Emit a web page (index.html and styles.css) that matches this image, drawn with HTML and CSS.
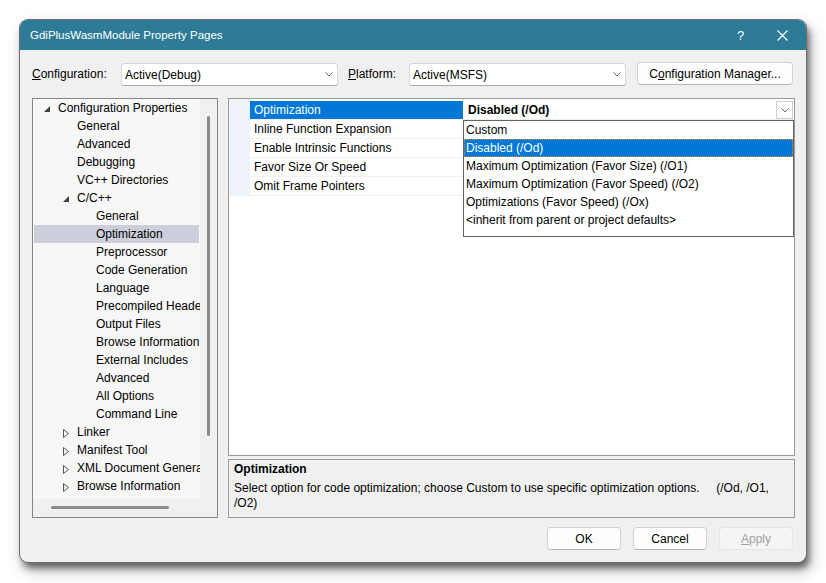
FILE: index.html
```html
<!DOCTYPE html>
<html>
<head>
<meta charset="utf-8">
<link rel="stylesheet" href="styles.css">
</head>
<body>
<div class="window">
  <div class="titlebar">
    <span class="title">GdiPlusWasmModule Property Pages</span>
    <span class="help">?</span>
    <svg class="close" width="11" height="11" viewBox="0 0 11 11"><path d="M0.5 0.5L10.5 10.5M10.5 0.5L0.5 10.5" stroke="#fff" stroke-width="1.1" fill="none"/></svg>
  </div>
  <div class="body">
    <div class="config-row">
      <span class="lbl lbl-config"><u>C</u>onfiguration:</span>
      <div class="combo"><span class="combo-text">Active(Debug)</span><svg class="chev" width="8" height="5" viewBox="0 0 8 5"><path d="M0.5 0.5L4 4L7.5 0.5" stroke="#666" fill="none"/></svg></div>
      <span class="lbl lbl-platform"><u>P</u>latform:</span>
      <div class="combo"><span class="combo-text">Active(MSFS)</span><svg class="chev" width="8" height="5" viewBox="0 0 8 5"><path d="M0.5 0.5L4 4L7.5 0.5" stroke="#666" fill="none"/></svg></div>
      <button class="btn btn-cfg">C<u>o</u>nfiguration Manager...</button>
    </div>
    <div class="main">
      <div class="tree">
        <div class="tree-area">
          <div class="tree-list">
            <div class="node l0t"><svg class="tw-exp" width="6" height="6" viewBox="0 0 6 6"><polygon points="6,0 6,6 0,6" fill="#404040"/></svg><span>Configuration Properties</span></div>
            <div class="node l1">General</div>
            <div class="node l1">Advanced</div>
            <div class="node l1">Debugging</div>
            <div class="node l1">VC++ Directories</div>
            <div class="node l1t"><svg class="tw-exp" width="6" height="6" viewBox="0 0 6 6"><polygon points="6,0 6,6 0,6" fill="#404040"/></svg><span>C/C++</span></div>
            <div class="node l2">General</div>
            <div class="node l2 selected">Optimization</div>
            <div class="node l2">Preprocessor</div>
            <div class="node l2">Code Generation</div>
            <div class="node l2">Language</div>
            <div class="node l2">Precompiled Headers</div>
            <div class="node l2">Output Files</div>
            <div class="node l2">Browse Information</div>
            <div class="node l2">External Includes</div>
            <div class="node l2">Advanced</div>
            <div class="node l2">All Options</div>
            <div class="node l2">Command Line</div>
            <div class="node l1t"><svg class="tw-col" width="6" height="9" viewBox="0 0 6 9"><polygon points="0.5,0.5 5.5,4.5 0.5,8.5" stroke="#555" fill="none"/></svg><span>Linker</span></div>
            <div class="node l1t"><svg class="tw-col" width="6" height="9" viewBox="0 0 6 9"><polygon points="0.5,0.5 5.5,4.5 0.5,8.5" stroke="#555" fill="none"/></svg><span>Manifest Tool</span></div>
            <div class="node l1t"><svg class="tw-col" width="6" height="9" viewBox="0 0 6 9"><polygon points="0.5,0.5 5.5,4.5 0.5,8.5" stroke="#555" fill="none"/></svg><span>XML Document Generator</span></div>
            <div class="node l1t"><svg class="tw-col" width="6" height="9" viewBox="0 0 6 9"><polygon points="0.5,0.5 5.5,4.5 0.5,8.5" stroke="#555" fill="none"/></svg><span>Browse Information</span></div>
          </div>
          <div class="vscroll"><div class="vthumb"></div></div>
        </div>
        <div class="hscroll"><div class="hthumb"></div></div>
      </div>
      <div class="right">
        <div class="grid">
          <div class="grid-rows">
            <div class="row"><div class="gut"></div><div class="name sel">Optimization</div><div class="val"><b>Disabled (/Od)</b><span class="ddbtn"><svg width="8" height="5" viewBox="0 0 8 5"><path d="M0.5 0.5L4 4L7.5 0.5" stroke="#666" fill="none"/></svg></span></div></div>
            <div class="row"><div class="gut"></div><div class="name">Inline Function Expansion</div><div class="val"></div></div>
            <div class="row"><div class="gut"></div><div class="name">Enable Intrinsic Functions</div><div class="val"></div></div>
            <div class="row"><div class="gut"></div><div class="name">Favor Size Or Speed</div><div class="val"></div></div>
            <div class="row"><div class="gut"></div><div class="name">Omit Frame Pointers</div><div class="val"></div></div>
          </div>
          <div class="dropdown">
            <div class="item">Custom</div>
            <div class="item hl">Disabled (/Od)</div>
            <div class="item">Maximum Optimization (Favor Size) (/O1)</div>
            <div class="item">Maximum Optimization (Favor Speed) (/O2)</div>
            <div class="item">Optimizations (Favor Speed) (/Ox)</div>
            <div class="item">&lt;inherit from parent or project defaults&gt;</div>
          </div>
        </div>
        <div class="desc">
          <div class="desc-title">Optimization</div>
          <div class="desc-text">Select option for code optimization; choose Custom to use specific optimization options.&nbsp;&nbsp;&nbsp;&nbsp; (/Od, /O1,<br>/O2)</div>
        </div>
      </div>
    </div>
    <div class="buttons">
      <button class="btn btn-dlg">OK</button>
      <button class="btn btn-dlg">Cancel</button>
      <button class="btn btn-dlg disabled"><u>A</u>pply</button>
    </div>
  </div>
</div>
</body>
</html>
```

FILE: styles.css
```css
* { box-sizing: border-box; }
html, body { height: 583px; }
body {
  margin: 0;
  padding: 20px 0 0 20px;
  background: #fff;
  font-family: "Liberation Sans", Arial, sans-serif;
  font-size: 12px;
  color: #000;
  overflow: hidden;
}
.window {
  width: 786px;
  height: 542px;
  border-radius: 8px;
  background: #f0f0f0;
  overflow: hidden;
  display: flex;
  flex-direction: column;
  box-shadow: 0 0 0 1px #6e6e6e, 3px 6px 7px 0 rgba(0,0,0,0.55), 4px 8px 16px 2px rgba(0,0,0,0.2);
}
.titlebar {
  height: 30px;
  flex: none;
  background: #2e7b97;
  color: #fff;
  display: flex;
  align-items: center;
  padding-left: 10px;
}
.title { flex: 1; font-size: 11.5px; }
.help { width: 8px; margin-right: 32px; font-size: 13px; }
.close { margin-right: 18px; }
.body {
  flex: 1;
  padding: 0 11px 0 12px;
  display: flex;
  flex-direction: column;
}
.config-row {
  margin-top: 13px;
  height: 23px;
  display: flex;
  align-items: flex-start;
}
.lbl { line-height: 23px; }
.lbl-config { width: 89px; }
.lbl-platform { width: 61px; margin-left: 10px; }
.combo {
  width: 217px;
  height: 23px;
  background: #fff;
  border: 1px solid #d6d6d6;
  border-bottom-color: #a8a8a8;
  border-radius: 3px;
  display: flex;
  align-items: center;
  padding: 0 4px 0 3px;
}
.combo-text { flex: 1; }
.btn {
  font-family: inherit;
  font-size: 12px;
  color: #000;
  background: #fdfdfd;
  border: 1px solid #d2d2d2;
  border-bottom-color: #b8b8b8;
  border-radius: 4px;
  height: 23px;
  padding: 0;
}
.btn-cfg { width: 156px; margin-left: 11px; margin-top: -1px; }
.main {
  margin-top: 12px;
  height: 420px;
  display: flex;
  gap: 10px;
}
.tree {
  width: 186px;
  border: 1px solid #868686;
  display: flex;
  flex-direction: column;
  background: #f0f0f0;
}
.tree-area { height: 400px; display: flex; }
.tree-list {
  flex: 1;
  background: #f7f7f7;
  overflow: hidden;
  white-space: nowrap;
}
.node {
  height: 18px;
  line-height: 18px;
  display: flex;
  align-items: center;
}
.node.l0t { padding-left: 11px; }
.node.l1 { padding-left: 44px; }
.node.l1t { padding-left: 30px; }
.node.l2 { padding-left: 63px; }
.tw-exp { margin-right: 8px; margin-top: 2px; flex: none; }
.tw-col { margin-right: 8px; margin-top: 2px; flex: none; }
.node.selected { background: #cccedb; margin: 0 1px; padding-left: 62px; }
.vscroll { width: 17px; background: #f0f0f0; padding: 17px 0 0 7px; }
.vthumb { width: 3px; height: 320px; background: #8a8a8a; border-radius: 2px; }
.hscroll { height: 18px; background: #f0f0f0; padding: 7px 0 0 18px; }
.hthumb { width: 118px; height: 3px; background: #8a8a8a; border-radius: 2px; }
.right {
  flex: 1;
  display: flex;
  flex-direction: column;
  gap: 3px;
}
.grid {
  height: 358px;
  border: 1px solid #9a9a9a;
  background: #fff;
  position: relative;
}
.grid-rows {
  padding-top: 2px;
  background: linear-gradient(to right, #eef2f9 21px, #fff 21px);
}
.row { display: flex; height: 19px; }
.gut { width: 21px; }
.name {
  width: 213px;
  height: 19px;
  line-height: 18px;
  padding-left: 4px;
  border-bottom: 1px solid #f0f0f0;
  white-space: nowrap;
}
.name.sel { background: #0078d7; color: #fff; border-bottom-color: #f0f0f0; }
.val {
  flex: 1;
  height: 19px;
  line-height: 18px;
  padding-left: 5px;
  border-bottom: 1px solid #f0f0f0;
  display: flex;
  align-items: flex-start;
}
.val b { flex: 1; }
.ddbtn {
  width: 17px;
  height: 18px;
  border: 1px solid #cfcfcf;
  margin-right: 1px;
  display: flex;
  align-items: center;
  justify-content: center;
}
.dropdown {
  position: absolute;
  left: 234px;
  top: 21px;
  width: 331px;
  height: 117px;
  border: 1px solid #646464;
  background: #fff;
}
.item {
  height: 18px;
  line-height: 18px;
  padding-left: 2px;
  white-space: nowrap;
}
.item.hl {
  background: #0078d7;
  color: #fff;
  outline: 1px dotted #d98a3c;
  outline-offset: -1px;
}
.desc {
  height: 59px;
  border: 1px solid #9a9a9a;
  background: #f0f0f0;
  padding: 2px 5px 0 5px;
}
.desc-title { font-weight: bold; line-height: 15px; margin-bottom: 4px; }
.desc-text { line-height: 15px; }
.buttons {
  margin-top: 9px;
  margin-right: 2px;
  display: flex;
  justify-content: flex-end;
  gap: 12px;
}
.btn-dlg { width: 74px; }
.btn-dlg.disabled { color: #a0a0a0; background: #f5f5f5; border-color: #e6e6e6; }
```
